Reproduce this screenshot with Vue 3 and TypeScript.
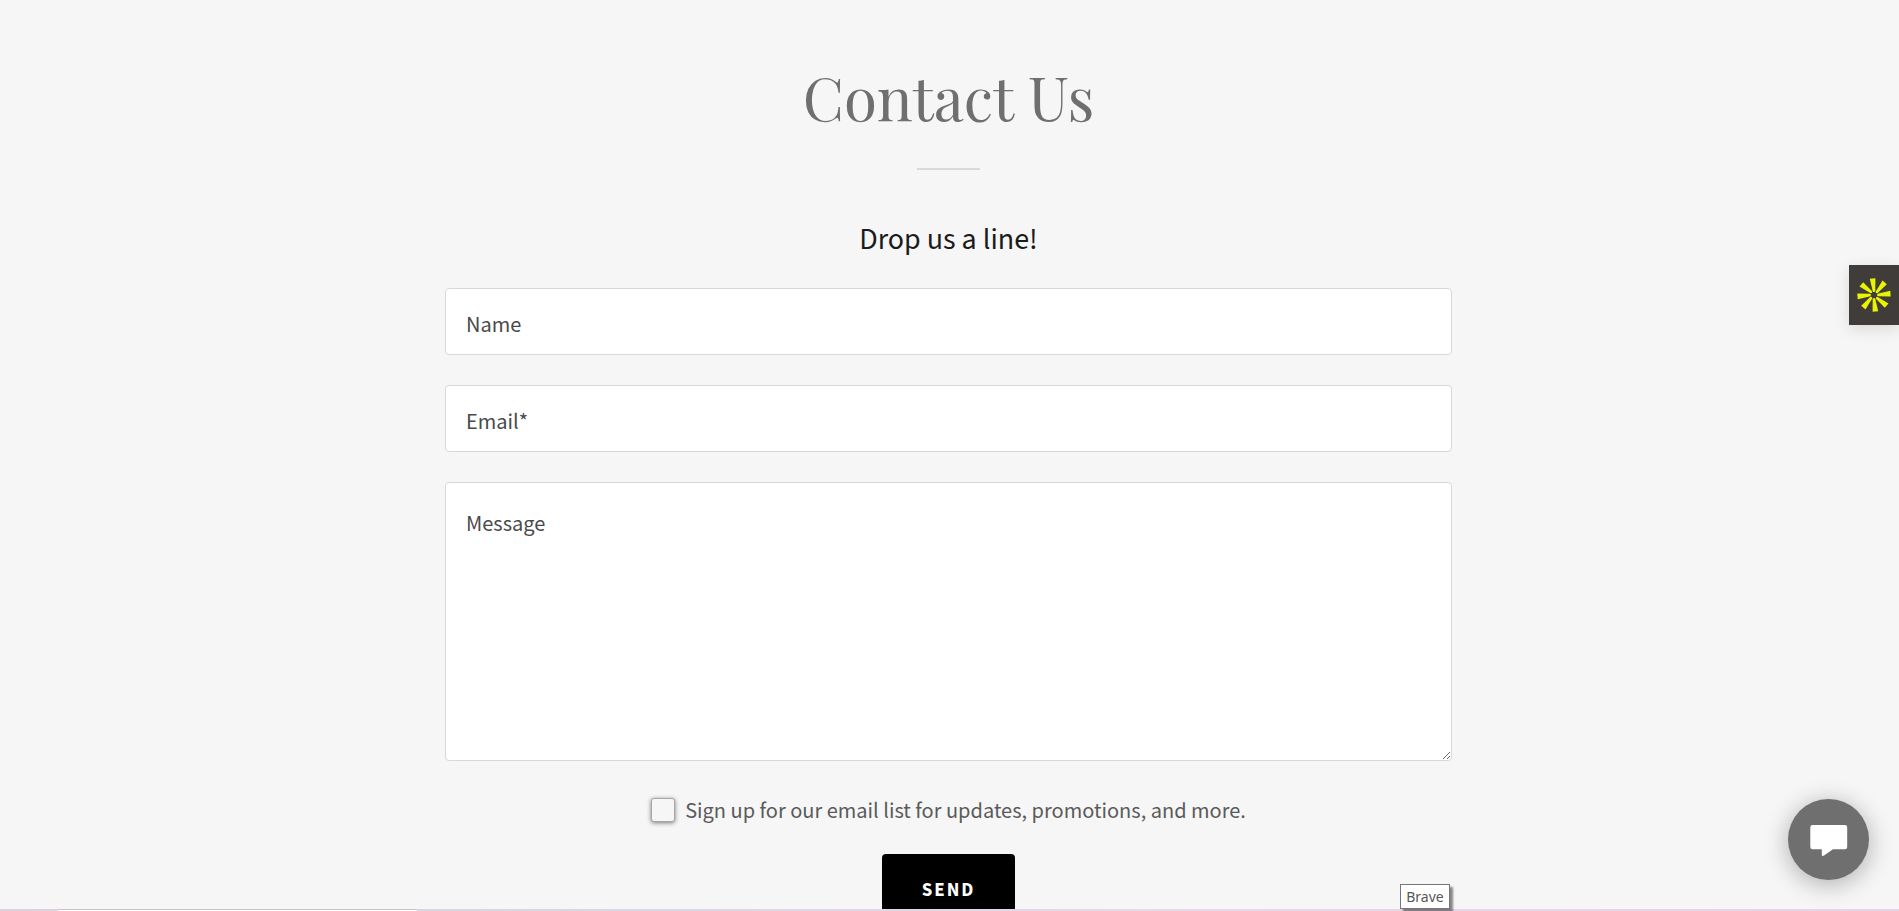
<script setup lang="ts">
import { ref } from 'vue'

const name = ref('')
const email = ref('')
const message = ref('')
const subscribed = ref(false)

const rays = [0, 45, 90, 135, 180, 225, 270, 315]
</script>

<template>
  <div class="page">
    <main class="contact">
      <h1 class="title">Contact Us</h1>
      <hr class="rule" />
      <form class="form" @submit.prevent>
        <h2 class="subtitle">Drop us a line!</h2>
        <input v-model="name" class="field" type="text" placeholder="Name" aria-label="Name" />
        <input v-model="email" class="field" type="email" placeholder="Email*" aria-label="Email" required />
        <textarea v-model="message" class="field message" placeholder="Message" aria-label="Message"></textarea>
        <label class="signup" for="signup">
          <input id="signup" v-model="subscribed" class="check" type="checkbox" />
          <span>Sign up for our email list for updates, promotions, and more.</span>
        </label>
        <button class="send" type="submit">SEND</button>
      </form>
    </main>

    <button class="side" type="button" aria-label="Open assistant">
      <svg width="34" height="34" viewBox="-17 -17 34 34" aria-hidden="true">
        <path
          v-for="angle in rays"
          :key="angle"
          d="M-4.2 -16.3 L1.4 -16.7 L1.3 -4 Q0.4 -2.2 -1.2 -3.5 Z"
          :transform="`rotate(${angle})`"
          fill="#e9f500"
        />
      </svg>
    </button>

    <button class="chat" type="button" aria-label="Open chat">
      <svg width="38" height="32" viewBox="0 0 38 32" aria-hidden="true">
        <path
          d="M2.5 0H35a2.2 2.2 0 0 1 2.2 2.2V22a2.2 2.2 0 0 1-2.2 2.2H23L14 30.6Q12 31.6 11.8 30V24.2H2.5A2.2 2.2 0 0 1 .3 22V2.2A2.2 2.2 0 0 1 2.5 0Z"
          fill="#fff"
        />
      </svg>
    </button>

    <div class="tooltip" role="tooltip">Brave</div>
    <div class="taskbar"><span class="search"></span></div>
  </div>
</template>

<style>
body {
  margin: 0;
}
</style>

<style scoped>
.page {
  position: relative;
  box-sizing: border-box;
  height: 100vh;
  overflow: hidden;
  padding: 56px 26px 0 24px;
  background: #f6f6f6;
  font-family: "Source Sans Pro", "Source Sans 3", "Noto Sans CJK SC", sans-serif;
}
.contact {
  max-width: 1007px;
  margin: 0 auto;
}
.title {
  margin: 0;
  color: #6f6f6f;
  font: 400 60px/80px "Playfair Display", "Liberation Serif", serif;
  text-align: center;
}
.rule {
  width: 63px;
  height: 2px;
  margin: 32px auto 0;
  border: 0;
  background: #d9d9d9;
}
.form {
  display: flex;
  flex-direction: column;
  align-items: center;
  gap: 30px;
  padding-top: 46px;
}
.subtitle {
  margin: 0 0 -6px;
  color: #1b1b1b;
  font-size: 30px;
  font-weight: 400;
  line-height: 48px;
}
.field {
  box-sizing: border-box;
  width: 100%;
  height: 67px;
  padding: 4px 20px 0;
  border: 1px solid #d8d8d8;
  border-radius: 4px;
  outline: 0;
  background: #fff;
  color: #4a4a4a;
  font-family: "Noto Sans CJK SC", "Noto Sans", sans-serif;
  font-size: 20px;
  line-height: 32px;
}
.field::placeholder {
  color: #4a4a4a;
  opacity: 1;
}
.message {
  display: block;
  height: 279px;
  padding-top: 24px;
  resize: vertical;
}
.signup {
  display: flex;
  align-items: center;
  gap: 10px;
  margin-top: 3px;
  color: #5a5a5a;
  font-family: "Noto Sans CJK SC", "Noto Sans", sans-serif;
  font-size: 20px;
  line-height: 32px;
}
.check {
  appearance: none;
  width: 24px;
  height: 24px;
  margin: 0;
  border: 1px solid #a6a6a6;
  border-radius: 3px;
  background: #f6f6f6;
  box-shadow: 0 1px 4px rgba(0, 0, 0, 0.5);
}
.check:checked {
  background: #5a5a5a;
}
.send {
  flex: none;
  height: 72px;
  margin-top: -2px;
  padding: 0 40px;
  border: 0;
  border-radius: 4px;
  background: #000;
  color: #fff;
  font-family: inherit;
  font-size: 19px;
  font-weight: 700;
  letter-spacing: 2px;
}
.side {
  position: absolute;
  top: 265px;
  right: 0;
  display: flex;
  align-items: center;
  justify-content: center;
  width: 50px;
  height: 60px;
  padding: 0;
  border: 0;
  background: #403c39;
  box-shadow: 0 4px 16px rgba(0, 0, 0, 0.12);
}
.chat {
  position: absolute;
  right: 30px;
  bottom: 31px;
  display: flex;
  align-items: center;
  justify-content: center;
  width: 81px;
  height: 81px;
  padding: 2px 0 0;
  border: 0;
  border-radius: 50%;
  background: #6f6f6f;
  box-shadow: 0 4px 24px rgba(0, 0, 0, 0.3);
}
.taskbar {
  position: absolute;
  right: 0;
  bottom: 0;
  left: 0;
  height: 2px;
  background: linear-gradient(90deg, #dcd2dc, #d9d6e2 30%, #e6d9e8 60%, #e6d4e6);
}
.search {
  display: block;
  box-sizing: border-box;
  width: 359px;
  height: 2px;
  margin-left: 58px;
  border-top: 1px solid #c6c4c8;
  background: #fff;
}
.tooltip {
  position: absolute;
  right: 449px;
  bottom: 2px;
  z-index: 1;
  box-sizing: border-box;
  width: 50px;
  height: 25px;
  border: 1px solid #767676;
  background: #fff;
  box-shadow: 3px 3px 2px rgba(0, 0, 0, 0.45);
  color: #575757;
  font: 400 14px/23px "Noto Sans", "Open Sans", sans-serif;
  text-align: center;
}
</style>
